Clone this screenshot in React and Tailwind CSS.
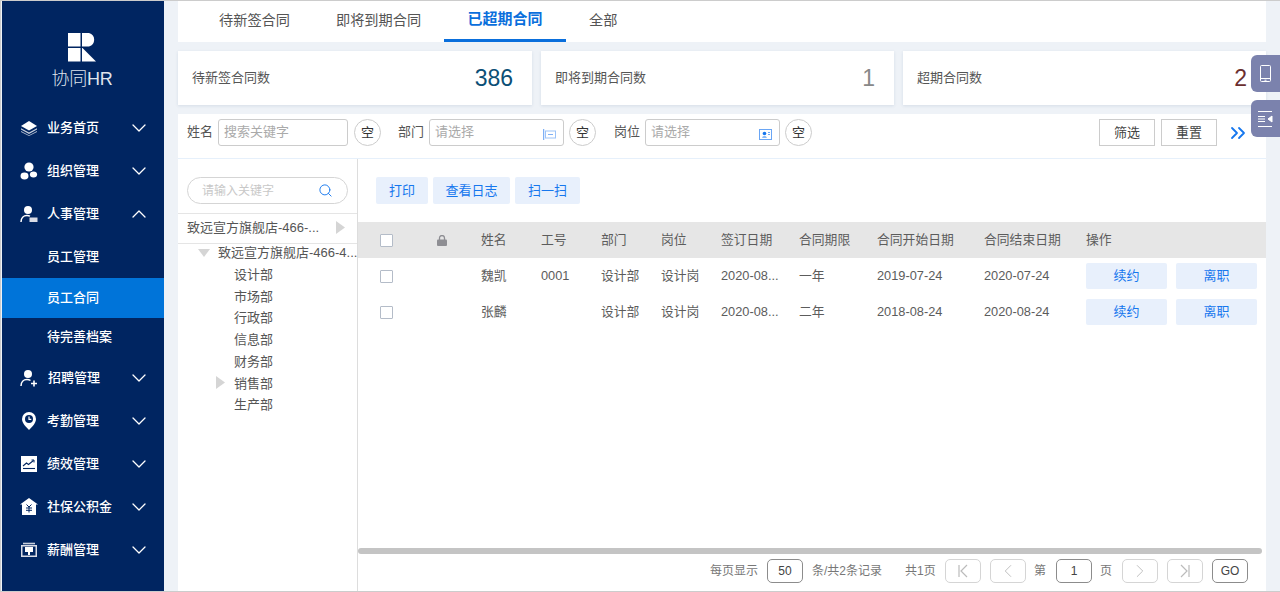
import { ChevronDown, ChevronUp, ChevronLeft, ChevronRight, ChevronsRight, Search } from "lucide-react";

const font = { fontFamily: '"Liberation Sans", "Noto Sans CJK SC", sans-serif' };

const IconLayers = () => (
  <svg width="18" height="16" viewBox="0 0 18 16" fill="#fff">
    <path d="M9 1 17 6 9 10.500 1 6Z" />
    <path d="M1 8.200 9 12.600 17 8.200V9.600L9 14 1 9.600Z" opacity=".8" />
    <path d="M1 11 9 15.200 17 11V12L9 16 1 12Z" opacity=".7" />
  </svg>
);
const IconOrg = () => (
  <svg width="18" height="18" viewBox="0 0 18 18" fill="#fff">
    <circle cx="9" cy="5" r="4.600" />
    <ellipse cx="4.500" cy="14" rx="4" ry="3.400" />
    <ellipse cx="13.500" cy="12.500" rx="3.600" ry="3" />
  </svg>
);
const IconUserCard = () => (
  <svg width="18" height="18" viewBox="0 0 18 18" fill="none">
    <circle cx="8" cy="5" r="4" fill="#fff" />
    <path d="M1 17c0-4 2.500-6.500 6-6.500 1 0 2 .2 3 .7" stroke="#fff" strokeWidth="1.500" />
    <rect x="9.500" y="12.500" width="8" height="4.500" fill="#d9dce6" />
  </svg>
);
const IconUserPlus = () => (
  <svg width="18" height="18" viewBox="0 0 18 18" fill="none">
    <circle cx="8" cy="5" r="4" fill="#fff" />
    <path d="M1 17c0-4 2.500-6.500 6-6.500 1.500 0 2.500.3 3.500 1" stroke="#fff" strokeWidth="1.500" />
    <path d="M14 11.500v6M11 14.500h6" stroke="#fff" strokeWidth="1.600" />
  </svg>
);
const IconPin = () => (
  <svg width="14" height="18" viewBox="0 0 14 18" fill="none">
    <path d="M7 0a7 7 0 0 1 7 7c0 4-4 8-7 11C4 15 0 11 0 7a7 7 0 0 1 7-7Z" fill="#fff" />
    <circle cx="7" cy="7" r="4" fill="#002561" />
    <path d="M7 4.500V7.300H9.300" stroke="#fff" strokeWidth="1.200" />
  </svg>
);
const IconChart = () => (
  <svg width="16" height="16" viewBox="0 0 16 16" fill="none">
    <rect width="16" height="16" fill="#fff" />
    <path d="M2 10 5.500 7l2 1.500L12.500 4.500" stroke="#002561" strokeWidth="1.100" />
    <path d="M10.500 4h2.500v2.500" stroke="#002561" strokeWidth="1" />
    <path d="M2 12.500h12" stroke="#002561" strokeWidth="1.100" />
  </svg>
);
const IconHouse = () => (
  <svg width="18" height="17" viewBox="0 0 18 17" fill="none">
    <path d="M9 0 18 6.500H16V17H2V6.500H0Z" fill="#fff" />
    <path d="M6.500 6.500 9 9l2.500-2.500M9 9v5.500M6 10h6M6 12.300h6" stroke="#002561" strokeWidth="1" />
  </svg>
);
const IconBox = () => (
  <svg width="16" height="15" viewBox="0 0 16 15" fill="none">
    <path d="M2 1.500h12" stroke="#c8cfdd" strokeWidth="1.600" />
    <rect x=".75" y="3.750" width="14.500" height="10.500" stroke="#d9dce6" strokeWidth="1.500" />
    <rect x="4" y="5" width="8" height="5" fill="#fff" />
    <path d="M8 7v6" stroke="#fff" strokeWidth="2" />
  </svg>
);

const menus = [
  { name: "业务首页", icon: <IconLayers /> },
  { name: "组织管理", icon: <IconOrg /> },
  { name: "人事管理", icon: <IconUserCard />, open: true },
];
const menus2 = [
  { name: "招聘管理", icon: <IconUserPlus />, shift: true },
  { name: "考勤管理", icon: <IconPin /> },
  { name: "绩效管理", icon: <IconChart /> },
  { name: "社保公积金", icon: <IconHouse /> },
  { name: "薪酬管理", icon: <IconBox /> },
];

function MenuItem({ item }) {
  return (
    <div className="h-[43px] flex items-center text-white text-[13px] font-medium">
      <div className="w-[45px] pl-[16px] pr-[7px] flex justify-center shrink-0">{item.icon}</div>
      <span className={item.shift ? "ml-px w-[79px]" : "w-[80px]"}>{item.name}</span>
      {item.open ? (
        <ChevronUp size={24} strokeWidth={1.300} className="text-white" />
      ) : (
        <ChevronDown size={24} strokeWidth={1.300} className="text-white" />
      )}
    </div>
  );
}

function Sidebar() {
  return (
    <div className="w-[162px] h-full bg-[#002561] shrink-0 ml-[1px]">
      <div className="h-[105px] pt-[32px] flex flex-col items-center pr-[2px]">
        <svg width="28" height="29" viewBox="0 0 28 29" fill="#fff">
          <rect x="0" y="0" width="12.500" height="13.500" />
          <path d="M14 0H21a7 7 0 0 1 0 13.500H14Z" />
          <rect x="0" y="15" width="12.500" height="13.500" />
          <path d="M14 15H14.500L28 28.500H14Z" />
        </svg>
        <div className="mt-[5px] text-[18px] leading-[24px] tracking-[-0.3px] font-light text-[#dfe3ec]">协同HR</div>
      </div>
      {menus.map((m) => (
        <MenuItem key={m.name} item={m} />
      ))}
      <div className="h-[43px] flex items-center pl-[45px] text-white text-[13px] font-medium">员工管理</div>
      <div className="h-[40px] flex items-center pl-[45px] bg-[#0074d9] text-white text-[13px] font-medium">员工合同</div>
      <div className="h-[38px] flex items-center pl-[45px] text-white text-[13px] font-medium">待完善档案</div>
      {menus2.map((m) => (
        <MenuItem key={m.name} item={m} />
      ))}
    </div>
  );
}

function Tabs() {
  const tabs = ["待新签合同", "即将到期合同", "已超期合同", "全部"];
  return (
    <div className="h-[42px] bg-white flex pl-[18px] shrink-0">
      {tabs.map((t, i) => (
        <div
          key={t}
          className={
            i === 2
              ? "h-[42px] w-[122px] flex items-center justify-center text-[15px] font-bold text-[#0a6fdc] border-b-[3px] border-[#0a6fdc]"
              : "h-[42px] px-[23px] flex items-center text-[14.2px] text-[#555]"
          }
        >
          {t}
        </div>
      ))}
    </div>
  );
}

function Cards() {
  const cards = [
    { label: "待新签合同数", num: "386", w: "w-[354px]", color: "text-[#0b4f76]" },
    { label: "即将到期合同数", num: "1", w: "w-[353px]", color: "text-[#888]" },
    { label: "超期合同数", num: "2", w: "w-[363px]", color: "text-[#6b2f2f]" },
  ];
  return (
    <div className="flex gap-[9px] mt-[9px] shrink-0">
      {cards.map((c) => (
        <div
          key={c.label}
          className={`${c.w} h-[54px] bg-white flex items-center justify-between pl-[14px] pr-[19px] shadow-[0_1px_3px_rgba(40,70,120,0.12)]`}
        >
          <span className="text-[13px] text-[#555]">{c.label}</span>
          <span className={`text-[23px] ${c.color}`}>{c.num}</span>
        </div>
      ))}
    </div>
  );
}

const ClearBtn = ({ first }) => (
  <button className={`w-[27px] h-[27px] ${first ? "ml-[6px]" : "ml-[5px]"} rounded-full border border-[#ccc] bg-white text-[13px] text-[#333] flex items-center justify-center shrink-0`}>
    空
  </button>
);

const DeptIcon = () => (
  <svg width="13" height="11" viewBox="0 0 13 11" fill="none" className="absolute right-[7px] top-[9px]">
    <path d="M.5 0v11" stroke="#7fb0f5" strokeWidth="1.500" />
    <rect x="2.500" y="2" width="10" height="7" stroke="#9cc3f8" />
    <path d="M5 5.500h5" stroke="#7fb0f5" />
  </svg>
);
const PostIcon = () => (
  <svg width="13" height="11" viewBox="0 0 13 11" fill="none" className="absolute right-[7px] top-[9px]">
    <rect x=".5" y=".5" width="12" height="10" fill="#fff" stroke="#6aa6f5" />
    <circle cx="5.500" cy="4.500" r="1.800" fill="#1677ee" />
    <path d="M3 8.500c.5-1.500 4.500-1.500 5 0Z" fill="#1677ee" />
    <path d="M9 3.500h2M9 5.500h2" stroke="#6aa6f5" />
  </svg>
);

function FilterBar() {
  return (
    <div className="h-[44px] mt-[9px] bg-white flex items-center pl-[9px] pr-[16px] shrink-0 pb-[7px]">
      <span className="text-[13px] text-[#555] w-[31px] -mt-px">姓名</span>
      <div className="w-[130px] h-[27px] border border-[#ccc] rounded-[3px] pl-[5px] pb-px flex items-center text-[13px] text-[#aaa]">搜索关键字</div>
      <ClearBtn first />
      <span className="text-[13px] text-[#555] w-[31px] ml-[17px] -mt-px">部门</span>
      <div className="relative w-[135px] h-[27px] border border-[#ccc] rounded-[3px] pl-[5px] pb-px flex items-center text-[13px] text-[#aaa]">
        请选择
        <DeptIcon />
      </div>
      <ClearBtn />
      <span className="text-[13px] text-[#555] w-[31px] ml-[18px] -mt-px">岗位</span>
      <div className="relative w-[135px] h-[27px] border border-[#ccc] rounded-[3px] pl-[5px] pb-px flex items-center text-[13px] text-[#aaa]">
        请选择
        <PostIcon />
      </div>
      <ClearBtn />
      <button className="ml-auto w-[56px] h-[27px] border border-[#ccc] text-[13px] text-[#444] flex items-center justify-center">筛选</button>
      <button className="ml-[6px] w-[56px] h-[27px] border border-[#ccc] text-[13px] text-[#444] flex items-center justify-center">重置</button>
      <ChevronsRight size={24} strokeWidth={1.800} className="text-[#1677ee] ml-[9px]" />
    </div>
  );
}

const Tri = ({ className }) => (
  <svg width="9" height="13" viewBox="0 0 9 13" className={className}>
    <path d="M0 0 9 6.500 0 13Z" fill="#d5d5d5" />
  </svg>
);

function Tree() {
  const depts = ["设计部", "市场部", "行政部", "信息部", "财务部", "销售部", "生产部"];
  return (
    <div className="w-[180px] border-r border-[#ddd] shrink-0 text-[13px] text-[#555]">
      <div className="px-[9px] pt-[18px]">
        <div className="h-[27px] w-[161px] border border-[#d5d5d5] rounded-full flex items-center justify-between pl-[14px] pr-[14px] text-[12px] text-[#c8c8c8]">
          请输入关键字
          <Search size={15} strokeWidth={1.500} className="text-[#1677ee]" />
        </div>
      </div>
      <div className="mt-[9px] h-[31px] border-y border-[#e5e5e5] flex items-center pl-[9px] pr-[12px] pb-[2px] justify-between">
        <span>致远宣方旗舰店-466-...</span>
        <Tri />
      </div>
      <div className="h-[17px] flex items-center pl-[20px]">
        <svg width="12" height="8" viewBox="0 0 12 8" className="shrink-0">
          <path d="M0 0H12L6 8Z" fill="#d5d5d5" />
        </svg>
        <span className="ml-[8px] whitespace-nowrap">致远宣方旗舰店-466-4...</span>
      </div>
      <div className="mt-[3px]">
        {depts.map((d) => (
          <div key={d} className="relative h-[21.7px] flex items-center pl-[56px]">
            {d === "销售部" && <Tri className="absolute left-[38px] top-[4px]" />}
            {d}
          </div>
        ))}
      </div>
    </div>
  );
}

const Check = ({ hdr }) => (
  <span className={`block w-[13px] h-[13px] border border-[#b4bcc8] rounded-[1px] ${hdr ? "bg-white" : ""}`} />
);

const rowGrid = "grid grid-cols-[57px_44px_60px_60px_60px_60px_78px_78px_107px_102px_1fr] pl-[22px]";

const rows = [
  { name: "魏凯", no: "0001", term: "一年", start: "2019-07-24", end: "2020-07-24" },
  { name: "张麟", no: "", term: "二年", start: "2018-08-24", end: "2020-08-24" },
];

function Table() {
  const head = ["姓名", "工号", "部门", "岗位", "签订日期", "合同期限", "合同开始日期", "合同结束日期", "操作"];
  return (
    <div className="flex-1 flex flex-col min-w-0 text-[12.8px] text-[#5c5c5c]">
      <div className="flex gap-[5px] pl-[18px] pt-[18px] h-[63px] shrink-0">
        <button className="w-[52px] h-[27px] bg-[#e8f0fc] rounded-[2px] text-[#1677ee] text-[13px]">打印</button>
        <button className="w-[77px] h-[27px] bg-[#e8f0fc] rounded-[2px] text-[#1677ee] text-[13px]">查看日志</button>
        <button className="w-[65px] h-[27px] bg-[#e8f0fc] rounded-[2px] text-[#1677ee] text-[13px]">扫一扫</button>
      </div>
      <div className={`${rowGrid} h-[36px] items-center bg-[#e6e6e6] shrink-0`}>
        <Check hdr />
        <svg width="10" height="11" viewBox="0 0 10 11" fill="#8e8e93">
          <path d="M2.500 5V3a2.500 2.500 0 0 1 5 0v2" fill="none" stroke="#8e8e93" strokeWidth="1.300" />
          <rect y="4.500" width="10" height="6.500" rx="1" />
        </svg>
        {head.map((h) => (
          <span key={h}>{h}</span>
        ))}
      </div>
      {rows.map((r) => (
        <div key={r.name} className={`${rowGrid} h-[36px] items-center shrink-0`}>
          <Check />
          <span />
          <span>{r.name}</span>
          <span>{r.no}</span>
          <span>设计部</span>
          <span>设计岗</span>
          <span>2020-08...</span>
          <span>{r.term}</span>
          <span>{r.start}</span>
          <span>{r.end}</span>
          <div className="flex gap-[9px]">
            <button className="w-[81px] h-[26px] bg-[#e8f0fc] rounded-[2px] text-[#1677ee] text-[13px]">续约</button>
            <button className="w-[81px] h-[26px] bg-[#e8f0fc] rounded-[2px] text-[#1677ee] text-[13px]">离职</button>
          </div>
        </div>
      ))}
      <div className="mt-auto h-[6px] w-[904px] rounded-full bg-[#c4c4c4] shrink-0" />
      <Pager />
    </div>
  );
}

const PageBtn = ({ children }) => (
  <button className="w-[36px] h-[24px] border border-[#d5d5d5] rounded-[5px] flex items-center justify-center text-[#bbb] shrink-0">
    {children}
  </button>
);
const PageInput = ({ children }) => (
  <div className="w-[36px] h-[24px] border border-[#8c8c8c] rounded-[5px] flex items-center justify-center text-[12px] text-[#444] shrink-0">
    {children}
  </div>
);

function Pager() {
  return (
    <div className="h-[37px] flex items-center pl-[352px] pb-[4px] text-[12px] text-[#777] shrink-0">
      <span className="w-[57px]">每页显示</span>
      <PageInput>50</PageInput>
      <span className="ml-[9px] w-[93px]">条/共2条记录</span>
      <span className="w-[40px]">共1页</span>
      <PageBtn>
        <svg width="14" height="14" viewBox="0 0 14 14" fill="none" stroke="#bbb" strokeWidth="1.200">
          <path d="M3 1v12M11 1 5 7l6 6" />
        </svg>
      </PageBtn>
      <span className="w-[9px]" />
      <PageBtn>
        <ChevronLeft size={22} strokeWidth={1} />
      </PageBtn>
      <span className="ml-[8px] w-[22px]">第</span>
      <PageInput>1</PageInput>
      <span className="ml-[8px] w-[22px]">页</span>
      <PageBtn>
        <ChevronRight size={22} strokeWidth={1} />
      </PageBtn>
      <span className="w-[9px]" />
      <PageBtn>
        <svg width="14" height="14" viewBox="0 0 14 14" fill="none" stroke="#bbb" strokeWidth="1.200">
          <path d="M11 1v12M3 1l6 6-6 6" />
        </svg>
      </PageBtn>
      <span className="w-[9px]" />
      <PageInput>GO</PageInput>
    </div>
  );
}

function SideTools() {
  return (
    <div className="absolute right-0 top-[54px] flex flex-col gap-[8px]">
      <div className="w-[29px] h-[37px] rounded-l-[6px] bg-[#7b82ad] flex items-center justify-center">
        <svg width="12" height="18" viewBox="0 0 12 18" fill="none" stroke="#fff" strokeWidth="1">
          <rect x=".5" y=".5" width="10" height="16" rx="1" />
          <path d="M1 13.500h9M4.500 15.200h2" />
        </svg>
      </div>
      <div className="w-[29px] h-[37px] rounded-l-[6px] bg-[#7b82ad] flex items-center justify-center">
        <svg width="15" height="16" viewBox="0 0 15 16" fill="none" stroke="#fff" strokeWidth="1">
          <path d="M0 .5h14M0 15.500h14M0 5.500h7M0 8h7M0 10.500h7" />
          <path d="M14 5v6L10 8Z" fill="#fff" />
        </svg>
      </div>
    </div>
  );
}

export default function App() {
  return (
    <div className="relative w-[1280px] h-[592px] overflow-hidden bg-[#eef2f7] flex border-l border-t border-b border-[#ccc]" style={font}>
      <Sidebar />
      <div className="w-[1088px] ml-[14px] -mt-px flex flex-col shrink-0">
        <Tabs />
        <Cards />
        <FilterBar />
        <div className="flex-1 min-h-0 bg-white flex border-t border-[#e6f0fb]">
          <Tree />
          <Table />
        </div>
      </div>
      <SideTools />
    </div>
  );
}
